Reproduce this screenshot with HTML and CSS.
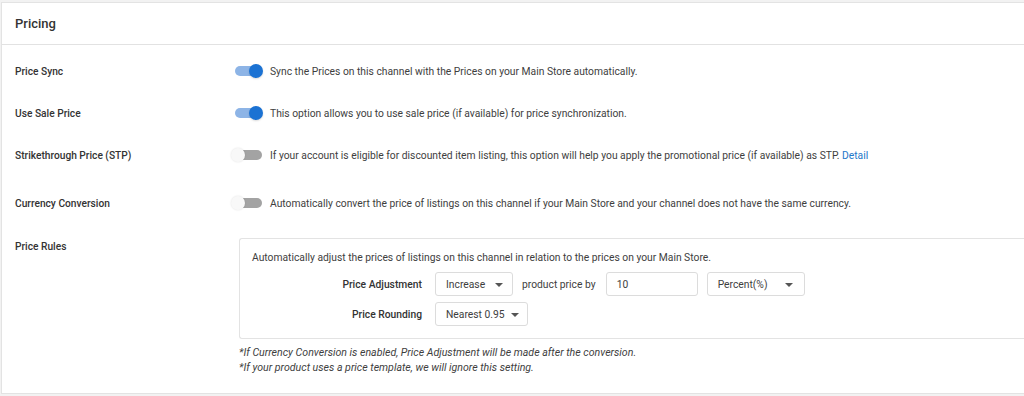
FILE: index.html
```html
<!DOCTYPE html>
<html lang="en">
<head>
<meta charset="utf-8">
<title>Pricing</title>
<link rel="stylesheet" href="styles.css">
</head>
<body>
<section class="card">
  <header class="card-header">Pricing</header>
  <div class="card-body">
    <div class="row r1">
      <div class="label">Price Sync</div>
      <div class="toggle on"><span class="track"></span><span class="thumb"></span></div>
      <div class="desc">Sync the Prices on this channel with the Prices on your Main Store automatically.</div>
    </div>
    <div class="row r2">
      <div class="label">Use Sale Price</div>
      <div class="toggle on"><span class="track"></span><span class="thumb"></span></div>
      <div class="desc">This option allows you to use sale price (if available) for price synchronization.</div>
    </div>
    <div class="row r3">
      <div class="label">Strikethrough Price (STP)</div>
      <div class="toggle"><span class="track"></span><span class="thumb"></span></div>
      <div class="desc">If your account is eligible for discounted item listing, this option will help you apply the promotional price (if available) as STP. <a class="link" href="#">Detail</a></div>
    </div>
    <div class="row r4">
      <div class="label">Currency Conversion</div>
      <div class="toggle"><span class="track"></span><span class="thumb"></span></div>
      <div class="desc">Automatically convert the price of listings on this channel if your Main Store and your channel does not have the same currency.</div>
    </div>
    <div class="row rules">
      <div class="label">Price Rules</div>
      <div class="rules-col">
        <div class="rules-box">
          <p class="rules-intro">Automatically adjust the prices of listings on this channel in relation to the prices on your Main Store.</p>
          <div class="rules-grid">
            <div class="rlabel">Price Adjustment</div>
            <div class="controls">
              <div class="select w-inc">Increase<span class="caret"></span></div>
              <span class="by">product price by</span>
              <div class="input">10</div>
              <div class="select w-pct">Percent(%)<span class="caret"></span></div>
            </div>
            <div class="rlabel">Price Rounding</div>
            <div class="controls">
              <div class="select w-near">Nearest 0.95<span class="caret"></span></div>
            </div>
          </div>
        </div>
        <div class="notes">
          <p class="note">*If Currency Conversion is enabled, Price Adjustment will be made after the conversion.</p>
          <p class="note">*If your product uses a price template, we will ignore this setting.</p>
        </div>
      </div>
    </div>
  </div>
</section>
</body>
</html>
```
FILE: styles.css
```css
* { box-sizing: border-box; }
html, body { margin: 0; padding: 0; }
body {
  background: #f2f2f2;
  font-family: Roboto, "Liberation Sans", Arial, sans-serif;
  color: #333;
  width: 1024px;
  height: 396px;
  overflow: hidden;
}
.card {
  margin: 2px 0 0 1px;
  width: 1040px;
  height: 392px;
  background: #fff;
  border: 1px solid #e3e3e3;
}
.card-header {
  height: 42px;
  padding-left: 13px;
  display: flex;
  align-items: center;
  font-size: 13px;
  font-weight: 500;
  color: #333;
  border-bottom: 1px solid #e2e2e2;
}
.card-body {
  padding-top: 10px;
}
.row {
  display: flex;
  align-items: center;
  height: 32px;
}
.r2, .r3 { margin-top: 10px; }
.r4 { margin-top: 16px; }
.rules {
  margin-top: 19px;
  height: auto;
  align-items: flex-start;
}
.label {
  width: 233px;
  padding-left: 13px;
  font-size: 10.2px;
  font-weight: 500;
  color: #333;
}
.rules .label {
  line-height: 14px;
  padding-top: 2px;
  width: 237px;
}
.toggle {
  position: relative;
  width: 28px;
  height: 14px;
  margin-right: 7px;
  flex: none;
}
.track {
  position: absolute;
  left: 0;
  top: 2px;
  width: 27px;
  height: 10px;
  border-radius: 5px;
  background: #a3a3a3;
}
.thumb {
  position: absolute;
  top: 0;
  left: -4px;
  width: 14px;
  height: 14px;
  border-radius: 50%;
  background: #f8f8f8;
  box-shadow: 0 0 2px rgba(0,0,0,0.12);
}
.toggle.on .track { background: #8db4e6; }
.toggle.on .thumb {
  left: 14px;
  background: #1b72d3;
  box-shadow: 0 1px 2px rgba(0,0,0,0.15);
}
.desc {
  font-size: 10.3px;
  color: #3e3e3e;
}
.link {
  color: #2377c9;
  text-decoration: none;
}
.rules-col {
  flex: 1;
}
.rules-box {
  border: 1px solid #e3e3e3;
  border-right: none;
  border-radius: 3px 0 0 3px;
  height: 101px;
  padding: 12px 0 0 12px;
}
.rules-intro {
  margin: 0;
  font-size: 10.3px;
  line-height: 14px;
  color: #3e3e3e;
}
.rules-grid {
  display: grid;
  grid-template-columns: 170px auto;
  column-gap: 13px;
  row-gap: 6px;
  margin-top: 7px;
  align-items: center;
}
.rlabel {
  text-align: right;
  font-size: 10.3px;
  font-weight: 500;
  color: #333;
}
.controls {
  display: flex;
  align-items: center;
}
.select, .input {
  height: 24px;
  border: 1px solid #dcdcdc;
  border-radius: 3px;
  font-size: 10.3px;
  color: #3e3e3e;
  display: flex;
  align-items: center;
  padding-left: 10px;
  position: relative;
  background: #fff;
}
.caret {
  position: absolute;
  top: 10px;
  width: 0;
  height: 0;
  border-left: 4px solid transparent;
  border-right: 4px solid transparent;
  border-top: 4px solid #555;
}
.w-inc { width: 78px; }
.w-inc .caret { right: 9px; }
.w-pct { width: 98px; margin-left: 9px; }
.w-pct .caret { right: 11px; }
.w-near { width: 93px; }
.w-near .caret { right: 8px; }
.by {
  margin: 0 10px 0 9px;
  font-size: 10.3px;
  color: #3e3e3e;
}
.input { width: 92px; }
.notes {
  margin-top: 6px;
}
.note {
  margin: 0;
  font-size: 10.6px;
  line-height: 15px;
  font-style: italic;
  color: #3e3e3e;
}
```
